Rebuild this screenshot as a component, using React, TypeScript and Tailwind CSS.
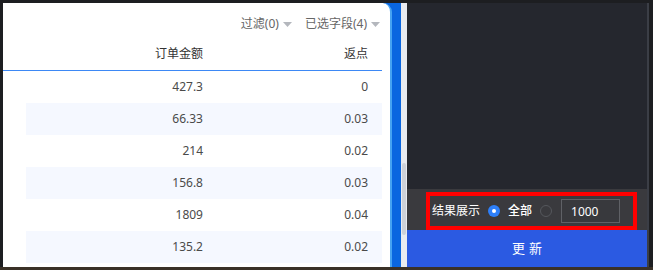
import { useState } from 'react';

const rows = [
	{ amount: '427.3', rebate: '0' },
	{ amount: '66.33', rebate: '0.03' },
	{ amount: '214', rebate: '0.02' },
	{ amount: '156.8', rebate: '0.03' },
	{ amount: '1809', rebate: '0.04' },
	{ amount: '135.2', rebate: '0.02' },
];

function Caret() {
	return (
		<svg width="9" height="5" viewBox="0 0 9 5" className="ml-[4px] mt-[1px]">
			<path d="M0 0 L9 0 L4.5 5 Z" fill="#b4b7bd" />
		</svg>
	);
}

function App() {
	const [showAll, setShowAll] = useState(true);
	const [limit, setLimit] = useState('1000');

	return (
		<div
			className="box-border flex h-[270px] w-[653px] overflow-hidden border-b-[3px] border-[#3a3127] bg-[#1d1e21] pl-[3px] pt-[3px]"
			style={{ fontFamily: '"Noto Sans", "Noto Sans CJK SC", sans-serif' }}
		>
			{/* 左侧表格 */}
			<div className="flex w-[398px] bg-[#0a66e0]">
				<div className="flex w-[389px] flex-col overflow-hidden rounded-tr-[9px] border-r-2 border-[#46a3f2] bg-white">
					<div className="flex h-[35px] items-start justify-end gap-[13px] pr-[10px] pt-[12px] text-[12px] leading-[18px] text-[#666]">
						<span className="flex items-center">
							过滤(0)
							<Caret />
						</span>
						<span className="flex items-center">
							已选字段(4)
							<Caret />
						</span>
					</div>

					<div className="mr-[8px] flex h-[33px] items-center border-b border-[#3d88f5] text-[12px] text-[#333]">
						<div className="w-[23px]" />
						<div className="w-[189px] pr-[12px] text-right">订单金额</div>
						<div className="flex-1 pr-[14px] text-right">返点</div>
					</div>

					{rows.map((row, i) => (
						<div key={i} className="mr-[8px] flex h-[32px] items-center text-[12px] text-[#4a4a4a]">
							<div className="w-[23px]" />
							<div
								className={
									'flex h-full flex-1 items-center ' + (i % 2 === 1 ? 'bg-[#f5f8ff]' : 'bg-white')
								}
							>
								<div className="w-[189px] pr-[12px] text-right">{row.amount}</div>
								<div className="flex-1 pr-[14px] text-right">{row.rebate}</div>
							</div>
						</div>
					))}
				</div>
			</div>

			{/* 滚动条 */}
			<div className="flex w-[6px] flex-col bg-[#e9ebf0] pt-[160px]">
				<div className="ml-[1px] h-[72px] w-[4px] rounded-full bg-[#cdd1d9]" />
			</div>

			{/* 右侧面板 */}
			<div className="flex w-[240px] flex-col bg-[#25272e]">
				<div className="flex-1" />
				<div className="flex h-[41px] items-end bg-[#3a3a3e] pl-[19px]">
					<div className="flex h-[38px] w-[211px] items-center border-[4px] border-[#ff0000] pl-[2px] text-[12px] text-white">
						<span>结果展示</span>
						<span
							className={
								'ml-[8px] flex h-[12px] w-[12px] items-center justify-center rounded-full ' +
								(showAll ? 'bg-[#2d7ff9]' : 'border border-[#55575c]')
							}
							onClick={() => setShowAll(true)}
						>
							{showAll && <span className="h-[4px] w-[4px] rounded-full bg-white" />}
						</span>
						<span className="ml-[8px] font-medium">全部</span>
						<span
							className={
								'ml-[8px] flex h-[12px] w-[12px] items-center justify-center rounded-full ' +
								(!showAll ? 'bg-[#2d7ff9]' : 'border border-[#55575c]')
							}
							onClick={() => setShowAll(false)}
						>
							{!showAll && <span className="h-[4px] w-[4px] rounded-full bg-white" />}
						</span>
						<input
							value={limit}
							onChange={(e) => setLimit(e.target.value)}
							className="ml-[9px] box-border h-[24px] w-[59px] border border-[#5f6166] bg-[#38393d] pl-[9px] text-[12px] text-white outline-none"
						/>
					</div>
				</div>
				<button className="flex h-[37px] items-center justify-center bg-[#2b5ae2] pl-[4px] text-[13px] tracking-[4px] text-white">
					更新
				</button>
			</div>

			<div className="w-[2px] bg-[#3b3e46]" />
		</div>
	);
}

export default App;
